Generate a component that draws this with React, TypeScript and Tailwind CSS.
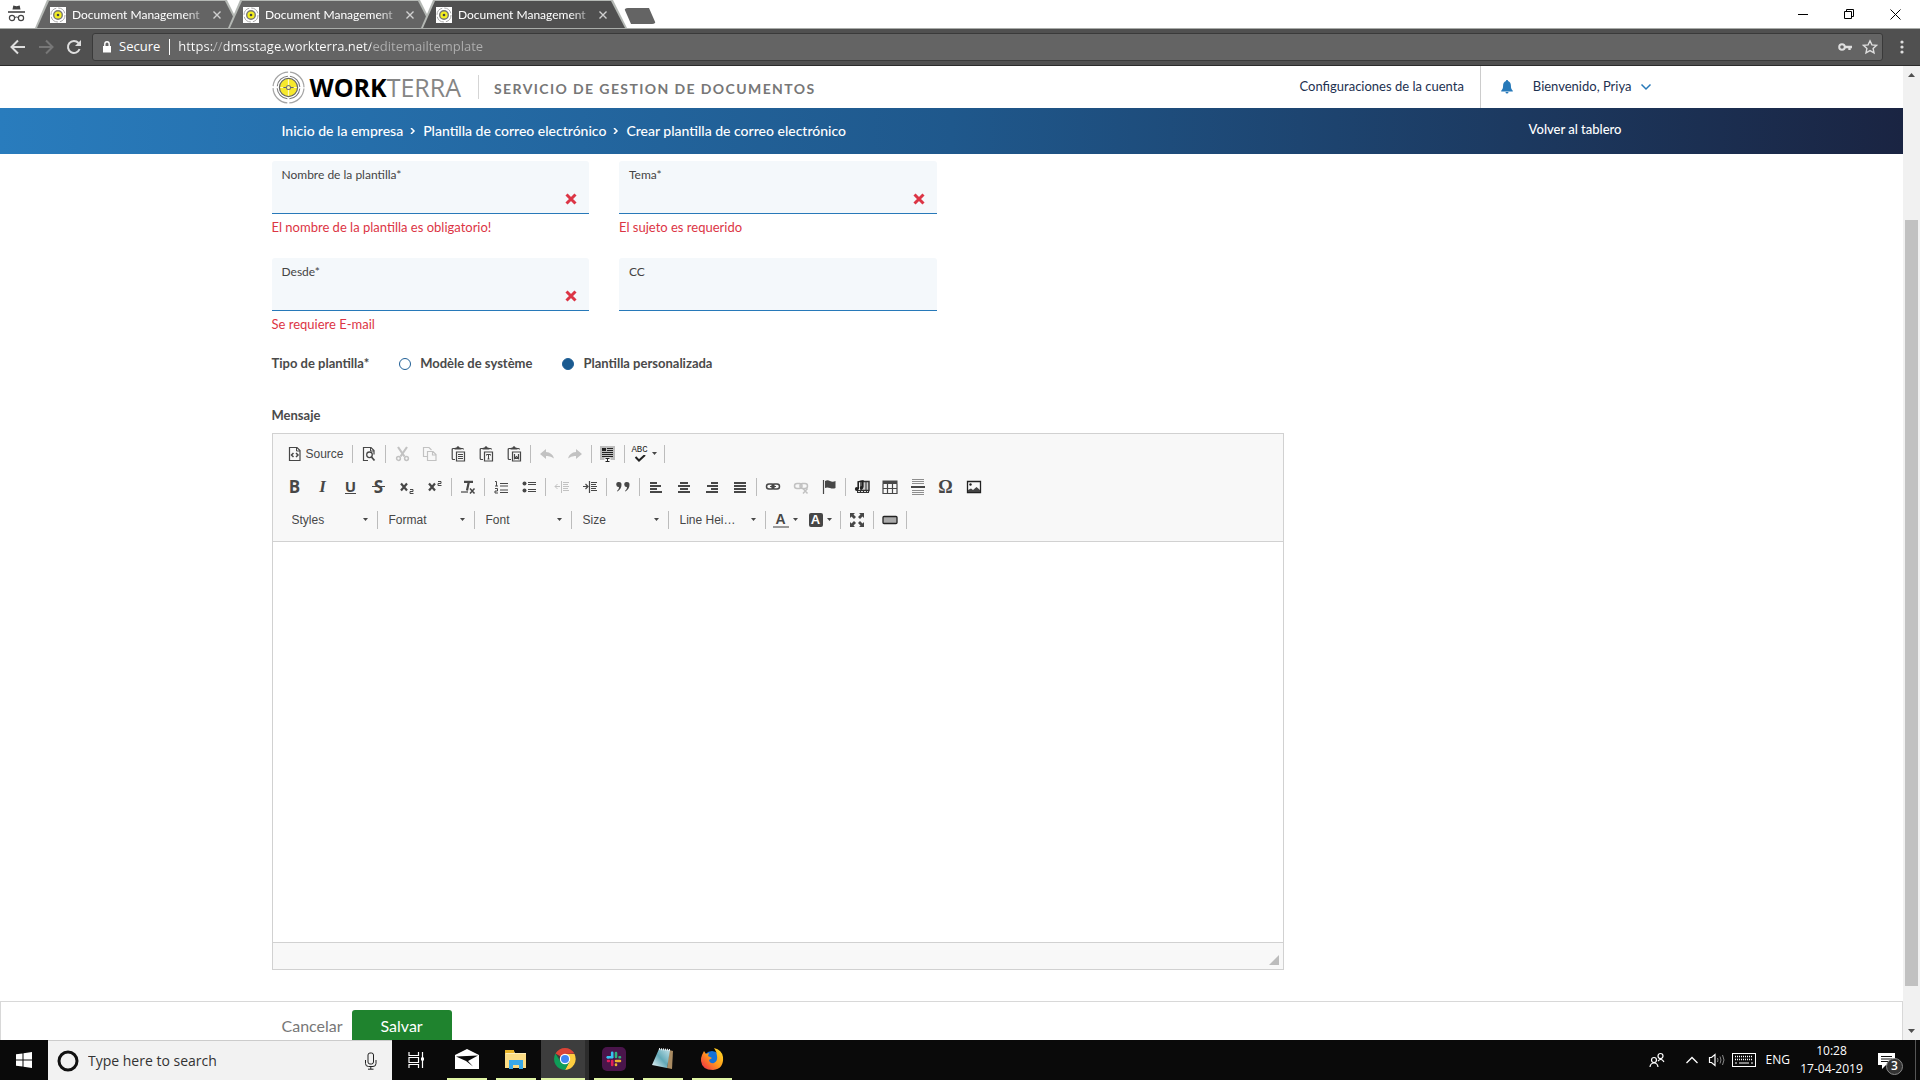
import React from "react";

type Kids = { children?: React.ReactNode };

function Icon({ size = 16, className = "", children }: Kids & { size?: number; className?: string }) {
  return (
    <svg width={size} height={size} viewBox={`0 0 ${size} ${size}`} className={`shrink-0 ${className}`} fill="none" stroke="currentColor" aria-hidden="true">
      {children}
    </svg>
  );
}

function Emblem({ size }: { size: number }) {
  return (
    <svg width={size} height={size} viewBox="0 0 32 32" className="shrink-0" fill="none" aria-hidden="true">
      <circle cx="16" cy="16" r="15" stroke="#a5a5a5" strokeWidth="1.2" strokeDasharray="21.600 2" strokeDashoffset="-1" />
      <circle cx="16" cy="16" r="11" stroke="#777" strokeWidth="1" strokeDasharray="15.300 2" strokeDashoffset="-1" />
      <circle cx="16" cy="16" r="8.800" fill="#f7e92c" stroke="#666" strokeWidth="1.200" />
      <path d="M16 8v16M8 16h16" stroke="#fffbc0" strokeWidth="1.200" />
      <circle cx="16" cy="16" r="2" fill="#fff7a0" stroke="#777" strokeWidth="1" />
      <path d="M11 16h3M18 16h3" stroke="#666" strokeWidth="1" />
    </svg>
  );
}

function Tab({ active = false }: { active?: boolean }) {
  return (
    <div className={`relative -mr-[13px] h-[28px] w-[206px] shrink-0 bg-[#b4b8b4] [clip-path:polygon(0_100%,12px_0,calc(100%_-_14px)_0,100%_100%)] ${active ? "z-10" : ""}`}>
      <div className={`ml-[2px] mr-[2px] flex h-full items-center pl-[13px] pt-px [clip-path:polygon(0_100%,12px_1px,calc(100%_-_14px)_1px,100%_100%)] ${active ? "bg-[#505050]" : "bg-[#646464]"}`}>
        <span className="flex size-4 shrink-0 items-center justify-center bg-white">
          <svg width="16" height="16" viewBox="0 0 16 16" fill="none" aria-hidden="true">
            <circle cx="8" cy="8" r="7" stroke="#aaa" strokeDasharray="9 2" />
            <circle cx="8" cy="8" r="4.3" fill="#f3ee20" stroke="#777" strokeWidth="1.4" />
            <circle cx="8" cy="8" r="1.3" fill="#444" />
          </svg>
        </span>
        <span className="ml-1.5 w-[132px] whitespace-nowrap font-['Lato',sans-serif] text-xs text-white [mask-image:linear-gradient(90deg,black_85%,rgba(0,0,0,0.3))]">
          Document Management
        </span>
        <button aria-label="Cerrar pestaña" className="ml-2 text-[#d0d0d0]">
          <Icon size={10}><path d="M1.5 1.5l7 7M8.5 1.5l-7 7" strokeWidth="1.4" /></Icon>
        </button>
      </div>
    </div>
  );
}

function Browser() {
  return (
    <header className="shrink-0 font-['Open_Sans',sans-serif]">
      <div className="flex h-[29px] border-b border-[#a9aca9] bg-white">
        <div className="flex w-[35px] shrink-0 pl-2 pt-[5px] text-[#444]">
          <Icon size={17}>
            <path d="M4.5 4.5L5.3.5l3.2.8 3.2-.8.8 4z" fill="currentColor" stroke="none" />
            <path d="M0 7h17" strokeWidth="1.6" />
            <circle cx="4" cy="13" r="2.6" strokeWidth="1.2" />
            <circle cx="13" cy="13" r="2.6" strokeWidth="1.2" />
            <path d="M6.6 12.5q1.9-1 3.8 0" />
          </Icon>
        </div>
        <Tab />
        <Tab />
        <Tab active />
        <button aria-label="Nueva pestaña" className="ml-[10px] mt-[8px] h-4 w-8 shrink-0 rounded-sm bg-[#646464] [clip-path:polygon(0_0,25px_0,100%_100%,7px_100%)]" />
        <div className="ml-auto mr-[2px] flex text-black">
          <button aria-label="Minimizar" className="flex w-[46px] items-center justify-center"><Icon size={10}><path d="M0 5.5h10" /></Icon></button>
          <button aria-label="Restaurar" className="flex w-[46px] items-center justify-center"><Icon size={10}><path d="M.5 2.5h7v7h-7zM2.5 2V.5h7v7H8" /></Icon></button>
          <button aria-label="Cerrar" className="flex w-[46px] items-center justify-center"><Icon size={11}><path d="M.5.5l10 10M10.500 .5l-10 10" /></Icon></button>
        </div>
      </div>
      <div className="flex h-[37px] items-center border-b border-[#2b2b2b] bg-[#505050] pl-2.5 text-[#dedede]">
        <button aria-label="Atrás" className="w-[28px]"><Icon><path d="M15 8H2M8 1.5L1.500 8 8 14.500" strokeWidth="2" /></Icon></button>
        <button aria-label="Adelante" className="w-[28px] text-[#777]"><Icon><path d="M1 8h13M8 1.500L14.500 8 8 14.500" strokeWidth="2" /></Icon></button>
        <button aria-label="Recargar" className="w-[26px]">
          <Icon><path d="M13.600 10A6 6 0 1 1 12.500 4" strokeWidth="2" /><path d="M15 1v6H9z" fill="currentColor" stroke="none" /></Icon>
        </button>
        <div className="flex h-[28px] min-w-0 flex-1 items-center rounded-[3px] border border-[#3a3a3a] bg-[#646464] pl-[7px] pr-[5px] text-white">
          <Icon size={14}>
            <path d="M3 6h8v6.500H3z" fill="currentColor" stroke="none" />
            <path d="M4.800 6V4a2.200 2.200 0 0 1 4.400 0v2" strokeWidth="1.400" />
          </Icon>
          <span className="ml-[5px] text-[13px]">Secure</span>
          <span className="ml-[9px] mr-2 h-4 w-px bg-white" />
          <input
            aria-label="Dirección"
            readOnly
            value="https://dmsstage.workterra.net/editemailtemplate"
            className="min-w-0 flex-1 bg-[linear-gradient(90deg,white_36px,#b0b0b0_36px,#b0b0b0_46px,white_46px,white_193px,#b0b0b0_193px)] bg-clip-text text-[13px] text-transparent outline-none"
          />
          <button aria-label="Contraseñas" className="mr-2.5 text-[#dedede]">
            <Icon size={14}><circle cx="4" cy="7" r="2.800" strokeWidth="2" /><path d="M7 7h7M11.500 7v3" strokeWidth="2.400" /></Icon>
          </button>
          <button aria-label="Marcar página" className="-mr-[1px] text-[#dedede]">
            <Icon><path d="M8 1.800l1.900 4.100 4.500.5-3.300 3 .9 4.400L8 11.600l-4 2.200.9-4.400-3.300-3 4.500-.5z" strokeWidth="1.400" /></Icon>
          </button>
        </div>
        <button aria-label="Menú" className="ml-[11px] mr-[10px]">
          <Icon><g fill="currentColor" stroke="none"><circle cx="8" cy="3" r="1.600" /><circle cx="8" cy="8" r="1.600" /><circle cx="8" cy="13" r="1.600" /></g></Icon>
        </button>
      </div>
    </header>
  );
}

function SiteHeader() {
  return (
    <div>
      <div className="mx-auto flex h-[42px] max-w-[1400px] items-center pl-5">
        <a href="#" className="flex items-center gap-[5px] font-['Open_Sans',sans-serif] text-[25px] leading-8 text-[#858585]">
          <Emblem size={33} />
          <span><b className="text-black">WORK</b>TERRA</span>
        </a>
        <span className="ml-[17px] mr-[15px] h-6 w-px bg-[#d5d5d5]" />
        <span className="pt-[3px] text-sm font-bold tracking-widest text-[#777]">SERVICIO DE GESTION DE DOCUMENTOS</span>
        <nav className="ml-auto flex h-full items-center text-[13px] text-[#1d3150]">
          <a href="#">Configuraciones de la cuenta</a>
          <span className="ml-4 h-full w-px bg-[#ccc]" />
          <button aria-label="Notificaciones" className="ml-[18px] text-[#2779b9]">
            <Icon><path d="M8 1c.8 0 1 .6 1 1 2 .6 2.900 2.300 2.900 4.500 0 3 .7 4 1.900 5.300v.7H2.200v-.7C3.400 10.500 4.100 9.500 4.100 6.500 4.100 4.300 5 2.600 7 2c0-.4.200-1 1-1zM6.500 13h3a1.500 1.500 0 0 1-3 0z" fill="currentColor" stroke="none" /></Icon>
          </button>
          <button className="ml-[18px] flex items-center gap-2">
            Bienvenido, Priya
            <Icon size={12} className="text-[#2779b9]"><path d="M1.500 3.500L6 8l4.500-4.500" strokeWidth="1.500" /></Icon>
          </button>
        </nav>
      </div>
      <div className="bg-[linear-gradient(90deg,#297cbd,#1f588c_50%,#1a2442)] text-sm font-medium text-white">
        <div className="mx-auto flex h-[46px] max-w-[1360px] items-center px-2.5">
          <nav aria-label="Ruta" className="flex items-center gap-[7px]">
            <a href="#">Inicio de la empresa</a>
            <Icon size={6}><path d="M1 0l3 3-3 3" strokeWidth="1.500" /></Icon>
            <a href="#">Plantilla de correo electrónico</a>
            <Icon size={6}><path d="M1 0l3 3-3 3" strokeWidth="1.500" /></Icon>
            <a href="#">Crear plantilla de correo electrónico</a>
          </nav>
          <a href="#" className="ml-auto pb-1 text-[13px]">Volver al tablero</a>
        </div>
      </div>
    </div>
  );
}

function Field({ id, label, error, invalid = true }: { id: string; label: string; error?: string; invalid?: boolean }) {
  return (
    <div className="h-[97px] min-w-0">
      <div className="relative h-[53px] rounded-t-[3px] border-b border-[#2779b9] bg-[#f4f8fb] px-2.5 pt-1.5">
        <label htmlFor={id} className="block text-xs leading-4 text-[#444]">{label}</label>
        <input id={id} aria-invalid={invalid} className="block h-6 w-[85%] bg-transparent text-sm outline-none" />
        {invalid && (
          <span className="absolute bottom-2 right-3 text-[#dc3545]">
            <Icon size={12}><path d="M1.500 1.500l9 9M10.500 1.500l-9 9" strokeWidth="3" /></Icon>
          </span>
        )}
      </div>
      {error && <p className="pt-[3px] text-[13px] leading-5 text-[#dc3545]">{error}</p>}
    </div>
  );
}

function Tool({ label, off = false, wide = false, children }: Kids & { label: string; off?: boolean; wide?: boolean }) {
  return (
    <button type="button" aria-label={label} disabled={off} className={`flex h-6 shrink-0 items-center justify-center ${wide ? "w-[35px] gap-1" : "w-7"} ${off ? "opacity-30" : ""}`}>
      {children}
      {wide && <Caret />}
    </button>
  );
}

const Caret = () => (
  <svg width="5" height="3" viewBox="0 0 5 3" className="shrink-0" aria-hidden="true"><path d="M0 0h5L2.500 3z" fill="#474747" /></svg>
);
const Sep = () => <span className="mx-[2px] h-[18px] w-px shrink-0 bg-[#bcbcbc]" />;
const Row = ({ children }: Kids) => <div className="flex h-[33px] items-center">{children}</div>;

const glyph = "text-[17px] font-bold leading-none font-['Open_Sans',sans-serif]";

function Combo({ label }: { label: string }) {
  return (
    <label className="flex h-6 w-[92px] shrink-0 items-center pl-[9px] pr-[7px]">
      <select aria-label={label} className="min-w-0 flex-1 appearance-none bg-transparent text-xs outline-none">
        <option>{label}</option>
      </select>
      <Caret />
    </label>
  );
}

function Clip({ children }: Kids) {
  return (
    <Icon>
      <path d="M5 2.500H3.200q-1 0-1 1v9q0 1 1 1H5M11 2.500h1.500q1 0 1 1" strokeWidth="1.200" />
      <path d="M4.500 3.500V2l2-.5Q7 .3 8 .3t1.500 1.200l2 .5v1.500z" fill="currentColor" stroke="none" />
      <path d="M6.500 6h8v9h-8z" strokeWidth="1.200" />
      {children}
    </Icon>
  );
}

function Lines({ rows }: { rows: [number, number][] }) {
  return (
    <Icon>
      {rows.map(([x, w], i) => <path key={i} d={`M${x} ${4 + i * 3}h${w}`} strokeWidth="2" />)}
    </Icon>
  );
}

function Toolbar() {
  return (
    <div className="border-b border-[#d1d1d1] bg-[#f8f8f8] px-2 pb-[5px] pt-[3px] font-['Liberation_Sans',sans-serif] text-xs text-[#474747]">
      <Row>
        <button type="button" className="flex h-6 w-[69px] shrink-0 items-center gap-1 pl-1.5">
          <Icon><path d="M2.500 1.500h7.500l3 3v10H2.500z" strokeWidth="1.200" /><path d="M9.500 2v3H13" /><path d="M6.500 7l-2 2 2 2M9 7l2 2-2 2" strokeWidth="1.500" /></Icon>
          <span className="-ml-px">Source</span>
        </button>
        <Sep />
        <Tool label="Preview"><Icon><path d="M7 14.500H2.500v-13H10l3 3v4" strokeWidth="1.200" /><path d="M9.500 2v3H13" /><circle cx="8.500" cy="8.800" r="2.800" strokeWidth="1.300" /><path d="M10.500 11l3 3.500" strokeWidth="1.800" /></Icon></Tool>
        <Sep />
        <Tool label="Cut" off><Icon><path d="M4 1l6.500 9.500M13 1L6.500 10.500" strokeWidth="2.200" /><circle cx="4.500" cy="12.500" r="1.900" strokeWidth="1.500" /><circle cx="12.500" cy="12.500" r="1.900" strokeWidth="1.500" /></Icon></Tool>
        <Tool label="Copy" off><Icon><path d="M5 10.500H1.500v-9H7l2.500 2.500M5.500 5.500H11l3 3v6H5.500zM10.500 6v3H14" strokeWidth="1.200" /></Icon></Tool>
        <Tool label="Paste"><Clip><path d="M8 8.500h5M8 10.500h5M8 12.500h5" /></Clip></Tool>
        <Tool label="Paste as plain text"><Clip><path d="M8.500 9.500v-1h4v1M10.500 8.500v4.500M9.500 13h2" /></Clip></Tool>
        <Tool label="Paste from Word"><Clip><path d="M8.500 8v4.500l2-2 2 2V8M8.500 12.500h4" strokeWidth="1.200" /></Clip></Tool>
        <Sep />
        <Tool label="Undo" off><Icon><path d="M1 8L7 3v3q6.500.5 8 6.500-3.500-3-8-2.500v3z" fill="currentColor" stroke="none" /></Icon></Tool>
        <Tool label="Redo" off><Icon><path d="M15 8L9 3v3Q2.500 6.500 1 12.500q3.500-3 8-2.500v3z" fill="currentColor" stroke="none" /></Icon></Tool>
        <Sep />
        <Tool label="Select all"><Icon><path d="M0 0h15v14H0z" fill="#bdbdbd" stroke="none" /><path d="M2 2h4v3H2z" fill="#222" stroke="none" /><path d="M7 2.500h6M7 4.500h6M2 6.500h11M2 8.500h11M2 10.500h11" stroke="#222" /><path d="M4.500 11.500h6v4.500h-6z" fill="#f8f8f8" stroke="none" /><path d="M5.500 12.500h4M7.500 12.500v3M5.500 15.500h4" stroke="#222" /></Icon></Tool>
        <Sep />
        <Tool label="Spell check" wide>
          <span className="flex w-4 flex-col items-center text-[#222]">
            <span className="font-['Liberation_Mono',monospace] text-[9px] leading-[9px]">ABC</span>
            <svg width="12" height="7" viewBox="0 0 12 7" fill="none" stroke="currentColor" strokeWidth="2" aria-hidden="true"><path d="M1.500 2l3.500 3.500L11 0" /></svg>
          </span>
        </Tool>
        <Sep />
      </Row>
      <Row>
        <Tool label="Bold"><span className={glyph}>B</span></Tool>
        <Tool label="Italic"><span className="font-['Liberation_Serif',serif] text-[17px] font-bold italic leading-none">I</span></Tool>
        <Tool label="Underline"><span className="border-b border-[#474747] font-['Open_Sans',sans-serif] text-[15px] font-bold leading-[14px]">U</span></Tool>
        <Tool label="Strikethrough">
          <span className={`${glyph} relative`}>S<span className="absolute -left-[2px] top-2 h-px w-[13px] bg-[#474747]" /></span>
        </Tool>
        <Tool label="Subscript"><Icon><path d="M2 4.500l6 7M8 4.500l-6 7" strokeWidth="2.200" /><path d="M11 10.500h3v2h-3v2h3.500" /></Icon></Tool>
        <Tool label="Superscript"><Icon><path d="M2 4.500l6 7M8 4.500l-6 7" strokeWidth="2.200" /><path d="M11 2.500h3v2h-3v2h3.500" /></Icon></Tool>
        <Sep />
        <Tool label="Remove format"><Icon><path d="M4 2.800h9M8.800 3L7 11.500" strokeWidth="2.200" /><path d="M1 13h7" strokeWidth="1.200" /><path d="M10 9.500l4.500 5M14.500 9.500l-4.500 5" strokeWidth="1.500" /></Icon></Tool>
        <Sep />
        <Tool label="Numbered list"><Icon><path d="M2 2.500h1.500V7M2 7h3M2 9.500h2.500V12H2v2h3M7 4.500h8M7 7h8M7 11h8M7 13.500h8" /></Icon></Tool>
        <Tool label="Bulleted list"><Icon><circle cx="3.500" cy="4.500" r="2" fill="currentColor" stroke="none" /><circle cx="3.500" cy="11.500" r="2" fill="currentColor" stroke="none" /><path d="M7 3.500h8M7 5.500h8M7 10.500h8M7 12.500h8" /></Icon></Tool>
        <Sep />
        <Tool label="Decrease indent" off><Icon><path d="M7.500 2v12M9 3.500h6M9 5.500h5M9 7.500h6M9 9.500h5M9 11.500h6M1 7.500h5M3.500 5L1 7.500 3.500 10" /></Icon></Tool>
        <Tool label="Increase indent"><Icon><path d="M7.500 2v12M9 3.500h6M9 5.500h5M9 7.500h6M9 9.500h5M9 11.500h6M1 7.500h5M3.500 5L6 7.500 3.500 10" strokeWidth="1.200" /></Icon></Tool>
        <Sep />
        <Tool label="Quote"><Icon><path d="M3.500 3a2.500 2.500 0 0 1 3 2.800Q6.500 10 2.500 12.500L2 12q2.300-2 2-4A2.500 2.500 0 0 1 3.500 3zM11.500 3a2.500 2.500 0 0 1 3 2.800q0 4.200-4 6.700L10 12q2.300-2 2-4a2.500 2.500 0 0 1-.5-5z" fill="currentColor" stroke="none" /></Icon></Tool>
        <Sep />
        <Tool label="Align left"><Lines rows={[[2, 7], [2, 11], [2, 7], [2, 12]]} /></Tool>
        <Tool label="Center"><Lines rows={[[4, 8], [2, 12], [4, 8], [2, 12]]} /></Tool>
        <Tool label="Align right"><Lines rows={[[7, 7], [3, 11], [7, 7], [2, 12]]} /></Tool>
        <Tool label="Justify"><Lines rows={[[2, 12], [2, 12], [2, 12], [2, 12]]} /></Tool>
        <Sep />
        <Tool label="Link"><Icon><rect x="1.500" y="5" width="7.500" height="5" rx="2.500" strokeWidth="1.500" /><rect x="7" y="5" width="7.500" height="5" rx="2.500" strokeWidth="1.500" /><path d="M5 7.500h6" /></Icon></Tool>
        <Tool label="Unlink" off><Icon><rect x="1.500" y="4.500" width="7.500" height="5" rx="2.500" strokeWidth="1.500" /><rect x="7" y="4.500" width="7.500" height="5" rx="2.500" strokeWidth="1.500" /><path d="M10 9.500l4.500 5M14.500 9.500l-4.500 5" strokeWidth="1.500" /></Icon></Tool>
        <Tool label="Anchor"><Icon><path d="M2.500 1v14" strokeWidth="1.200" /><path d="M4 2q2.500-1.500 5 0t5.500 0v7q-2.500 1-5.500 0t-5 0z" fill="currentColor" stroke="none" /></Icon></Tool>
        <Sep />
        <Tool label="Media"><Icon><path d="M7 2.500h8v9h-8z" fill="#ccc" stroke="#333" strokeWidth="1.500" /><path d="M12 3v9" stroke="#333" /><path d="M3 11h12v3H3z" fill="#333" stroke="none" /><path d="M4 12.500h10" stroke="#ddd" strokeDasharray="2 1" /><path d="M4.200 10V2.800l4.600-.8v6.500" stroke="#222" strokeWidth="1.600" /><circle cx="2.800" cy="10" r="1.900" fill="#222" stroke="none" /><circle cx="7.500" cy="8.800" r="1.700" fill="#222" stroke="none" /></Icon></Tool>
        <Tool label="Table"><Icon><path d="M.5 1.500h15V5H.5z" fill="currentColor" stroke="none" /><path d="M1 5v9.500h14V5M1 9.500h14M5.500 5v9.500M10.500 5v9.500" strokeWidth="1.200" /></Icon></Tool>
        <Tool label="Page break"><Icon><path d="M2 .5h12M2 2.500h12M2 4.500h12M2 11.500h12M2 13.500h12M2 15.500h12" opacity=".6" /><path d="M1 8h14" strokeWidth="2" /></Icon></Tool>
        <Tool label="Special character"><span className="font-['Liberation_Serif',serif] text-[18px] font-bold leading-none">Ω</span></Tool>
        <Tool label="Image"><Icon><path d="M1.500 2.500h13v11h-13z" strokeWidth="1.300" stroke="#222" /><circle cx="4.500" cy="5.500" r="1.200" fill="#222" stroke="none" /><path d="M2 13v-2l3-1.500 2 1.500 3.500-3 3.500 3v2z" fill="#444" stroke="none" /></Icon></Tool>
      </Row>
      <Row>
        <span className="w-[2px]" />
        <Combo label="Styles" /><Sep />
        <Combo label="Format" /><Sep />
        <Combo label="Font" /><Sep />
        <Combo label="Size" /><Sep />
        <Combo label="Line Hei…" /><Sep />
        <Tool label="Text color" wide><span className="w-4 border-b-2 border-[#999] text-center text-sm font-bold leading-[14px]">A</span></Tool>
        <Tool label="Background color" wide><span className="size-[14px] rounded-[2px] bg-[#474747] text-center text-[13px] font-bold leading-[14px] text-white">A</span></Tool>
        <Sep />
        <Tool label="Maximize"><Icon><path d="M1 1h5L4.500 2.500l2.500 2.500L5 7 2.500 4.500 1 6zM15 1v5l-1.500-1.500L11 7 9 5l2.500-2.500L10 1zM1 15v-5l1.500 1.500L5 9l2 2-2.500 2.500L6 15zM15 15h-5l1.500-1.500L9 11l2-2 2.500 2.500L15 10z" fill="currentColor" stroke="none" /></Icon></Tool>
        <Sep />
        <Tool label="Button"><Icon><rect x="1" y="4.500" width="14" height="7" rx="1" fill="#aaa" stroke="#222" strokeWidth="1.300" /></Icon></Tool>
        <Sep />
      </Row>
    </div>
  );
}

function Radio({ label, checked = false }: { label: string; checked?: boolean }) {
  return (
    <label className="flex items-center gap-[9px]">
      <input type="radio" name="tipo" defaultChecked={checked} className="size-3 appearance-none rounded-full border border-[#1f5f96] checked:bg-[#1a5a90]" />
      {label}
    </label>
  );
}

function Page() {
  return (
    <main className="flex min-w-0 flex-1 flex-col overflow-hidden bg-white">
      <SiteHeader />
      <form className="flex min-h-0 flex-1 flex-col" onSubmit={(e) => e.preventDefault()}>
        <div className="mx-auto w-full max-w-[1360px] flex-1 pt-[7px]">
          <div className="grid w-[665px] max-w-full grid-cols-2 gap-x-[30px]">
            <Field id="nombre" label="Nombre de la plantilla*" error="El nombre de la plantilla es obligatorio!" />
            <Field id="tema" label="Tema*" error="El sujeto es requerido" />
            <Field id="desde" label="Desde*" error="Se requiere E-mail" />
            <Field id="cc" label="CC" invalid={false} />
          </div>
          <fieldset className="flex h-[18px] items-center gap-[30px] text-[13px] font-bold text-[#4a4a4a]">
            <span>Tipo de plantilla*</span>
            <Radio label="Modèle de système" />
            <Radio label="Plantilla personalizada" checked />
          </fieldset>
          <label htmlFor="mensaje" className="mt-[34px] block text-[13px] font-bold leading-4 text-[#4a4a4a]">Mensaje</label>
          <div className="mt-2.5 w-[1012px] max-w-full border border-[#d1d1d1]">
            <Toolbar />
            <textarea id="mensaje" className="block h-[400px] w-full resize-none bg-white p-5 text-sm outline-none" />
            <div className="flex h-[27px] items-end justify-end border-t border-[#d1d1d1] bg-[#f8f8f8] p-1">
              <svg width="10" height="10" viewBox="0 0 10 10" aria-hidden="true"><path d="M10 0v10H0z" fill="#bcbcbc" /></svg>
            </div>
          </div>
        </div>
        <div className="h-[39px] shrink-0 overflow-hidden border border-b-0 border-[#d8d8d8] bg-white">
          <div className="mx-auto flex max-w-[1360px] items-start pl-2.5 pt-2 text-base">
            <button type="button" className="h-8 text-[#777]">Cancelar</button>
            <button type="submit" className="ml-[9px] h-8 w-[100px] rounded-t-[3px] bg-[#1f832e] text-white">Salvar</button>
          </div>
        </div>
      </form>
    </main>
  );
}

function ScrollBar() {
  return (
    <div className="flex w-[17px] shrink-0 flex-col items-center bg-[#f1f1f1]" aria-hidden="true">
      <svg width="17" height="17" viewBox="0 0 17 17"><path d="M5 11h7L8.500 7z" fill="#505050" /></svg>
      <div className="flex w-[13px] flex-1 flex-col pt-[137px] pb-[37px]"><div className="flex-1 bg-[#c1c1c1]" /></div>
      <svg width="17" height="17" viewBox="0 0 17 17"><path d="M5 6h7l-3.500 4z" fill="#505050" /></svg>
    </div>
  );
}

function TaskItem({ label, active = false, children }: Kids & { label: string; active?: boolean }) {
  return (
    <button aria-label={label} className={`flex h-full flex-col items-center ${active ? "w-12 border-r-4 border-[#2c2c2c] bg-[#3d3d3d]" : "w-10"}`}>
      <span className="flex flex-1 items-center">{children}</span>
      <span className="h-[2px] w-full bg-[#e0f5a5]" />
    </button>
  );
}

function Taskbar() {
  return (
    <footer className="flex h-10 shrink-0 items-center bg-[#0a0a0a] font-['Open_Sans',sans-serif] text-white">
      <button aria-label="Inicio" className="flex w-12 justify-center">
        <Icon><path d="M0 2.300L6.500 1.400v6.100H0zM7.500 1.200L16 0v7.500H7.500zM0 8.500h6.500v6.100L0 13.700zM7.500 8.500H16V16l-8.500-1.200z" fill="currentColor" stroke="none" /></Icon>
      </button>
      <div className="flex h-full w-[344px] items-center border-t border-[#ccc] bg-[#f2f2f2] pl-[9px] pr-3 text-[#222]">
        <Icon size={22}><circle cx="11" cy="11" r="9" strokeWidth="3" stroke="#111" /></Icon>
        <input aria-label="Buscar" placeholder="Type here to search" className="ml-[9px] min-w-0 flex-1 bg-transparent text-sm outline-none placeholder:text-[#333]" />
        <button aria-label="Micrófono"><Icon size={18}><rect x="6" y="1" width="5.500" height="11" rx="2" /><path d="M3.500 8v3.500q0 3 3 3H11q3 0 3-3V8M8.800 14.500V17M6 17.200h5.500" /></Icon></button>
      </div>
      <button aria-label="Vista de tareas" className="ml-[15px]"><Icon size={18}><path d="M2 1v3.500h9.500V1M2 17v-3.500h9.500V17M2 6.500h9.500v5H2zM15.500 1v16" strokeWidth="1.200" /><path d="M14 6.500h3v3h-3z" fill="currentColor" stroke="none" /></Icon></button>
      <div className="ml-[22px] flex h-full gap-[9px]">
        <TaskItem label="Correo"><svg width="24" height="20" viewBox="0 0 24 20"><path d="M0 6L12 0l12 6v14H0z" fill="#fff" /><path d="M1 7.500L23 6.500 13 12l5 5.500L11 12z" fill="#0a0a0a" /></svg></TaskItem>
        <TaskItem label="Archivos"><svg width="22" height="19" viewBox="0 0 22 19"><path d="M0 1h9l1 2h11v15H0z" fill="#fbdc84" /><path d="M0 0h9v3H0z" fill="#e9b427" /><path d="M4 10h14v9h-4v-4H8v4H4z" fill="#38a8e8" /><path d="M1 3h20v1H1z" fill="#fdeeb8" /></svg></TaskItem>
        <div className="-ml-[4px] -mr-[4px] h-full">
          <TaskItem label="Chrome" active>
            <svg width="22" height="22" viewBox="0 0 22 22" className="ml-1"><path d="M11 11L1.500 5.500A11 11 0 0 1 20.500 5.500L11 6z" fill="#db4437" /><path d="M11 6h9.500a11 11 0 0 1-9.500 16l4.500-8.500z" fill="#ffcd40" /><path d="M1.500 5.500l5 8 9 0L11 22A11 11 0 0 1 1.500 5.500z" fill="#0f9d58" /><circle cx="11" cy="11" r="5.200" fill="#fff" /><circle cx="11" cy="11" r="4" fill="#4285f4" /></svg>
          </TaskItem>
        </div>
        <TaskItem label="Slack">
          <svg width="24" height="24" viewBox="0 0 24 24" fill="none" strokeWidth="2.600" strokeLinecap="round"><rect width="24" height="24" rx="5" fill="#4a154b" /><path d="M10.200 5.800v4.200M5.800 10.200h.4" stroke="#36c5f0" /><path d="M6 10.200h4" stroke="#36c5f0" /><path d="M14 6v4M18 10.200h-.5" stroke="#2eb67d" /><path d="M14 14h4M14 18v-.5" stroke="#ecb22e" /><path d="M10.200 14v4M6 14h.8" stroke="#e01e5a" /></svg>
        </TaskItem>
        <TaskItem label="Bloc de notas">
          <svg width="24" height="22" viewBox="0 0 24 22"><defs><linearGradient id="note" x1="0" y1="1" x2="1" y2="0"><stop offset="0" stopColor="#f2fafc" /><stop offset=".5" stopColor="#62a9b7" /><stop offset="1" stopColor="#c5e3ea" /></linearGradient></defs><path d="M18 2l4 1-1 18-5-1z" fill="#a98b62" /><path d="M8 1l11 1-3 18L1 17z" fill="url(#note)" /><path d="M8 1l11 1" stroke="#eee" strokeWidth="2" strokeDasharray="1 1" /></svg>
        </TaskItem>
        <TaskItem label="Firefox">
          <svg width="24" height="24" viewBox="0 0 24 24"><defs><linearGradient id="fox" x1="1" y1="0" x2="0" y2="1"><stop offset="0" stopColor="#ffe226" /><stop offset=".5" stopColor="#ff9a1c" /><stop offset="1" stopColor="#f0204d" /></linearGradient></defs><circle cx="12" cy="13" r="9" fill="#1471d8" /><path d="M2 8l2-4 2 3 3-1-1 3 4 2-3 2q1 4 5 3 4-2 3-7 0-4-3-8 8 2 9 9 1 12-10 13Q2 23 1 14q0-4 1-6z" fill="url(#fox)" /></svg>
        </TaskItem>
      </div>
      <div className="ml-auto flex h-full items-center">
        <button aria-label="Contactos" className="mr-[21px]"><Icon><circle cx="11.500" cy="4" r="2.500" strokeWidth="1.200" /><circle cx="5" cy="8" r="2.500" strokeWidth="1.200" /><path d="M1 15q.5-4 4-4t4 4M9 9q3.500-3.500 6 1" strokeWidth="1.200" /></Icon></button>
        <button aria-label="Mostrar iconos ocultos"><Icon size={12}><path d="M.5 9L6 3.500 11.500 9" strokeWidth="1.300" /></Icon></button>
        <button aria-label="Volumen" className="ml-2.5"><Icon size={18}><path d="M1.500 6.500h2L7 3.500v11l-3.500-3h-2z" strokeWidth="1.200" /><path d="M9.500 7q1 2 0 4M12 5.500q2 3.500 0 7M14.500 4q3 5 0 10" stroke="#888" /></Icon></button>
        <button aria-label="Teclado" className="ml-1.5">
          <svg width="24" height="14" viewBox="0 0 24 14" fill="none" stroke="#fff" aria-hidden="true"><rect x=".5" y=".5" width="23" height="13" /><path d="M3 3.500h18M3 6.500h18" strokeDasharray="1 1" strokeWidth="1.500" /><path d="M3 10h2M7 10h10M19 10h2" /></svg>
        </button>
        <button className="ml-2.5 text-xs">ENG</button>
        <button className="ml-[11px] flex w-[61px] flex-col items-center whitespace-nowrap text-xs leading-[18px]"><span>10:28</span><span>17-04-2019</span></button>
        <button aria-label="Notificaciones" className="relative ml-4">
          <Icon size={17}><path d="M0 1h17v12h-9l-4 4v-4H0z" fill="currentColor" stroke="none" /><path d="M3 4.500h11M3 7h11M3 9.500h8" stroke="#111" /></Icon>
          <span className="absolute left-2 top-1.5 flex size-[17px] items-center justify-center rounded-full border border-[#888] bg-[#333] text-xs font-semibold leading-none">3</span>
        </button>
        <span className="ml-5 mr-1 h-full w-px bg-[#555]" />
      </div>
    </footer>
  );
}

export default function App() {
  return (
    <div className="flex h-screen flex-col overflow-hidden font-['Lato',sans-serif]">
      <Browser />
      <div className="flex min-h-0 flex-1">
        <Page />
        <ScrollBar />
      </div>
      <Taskbar />
    </div>
  );
}
